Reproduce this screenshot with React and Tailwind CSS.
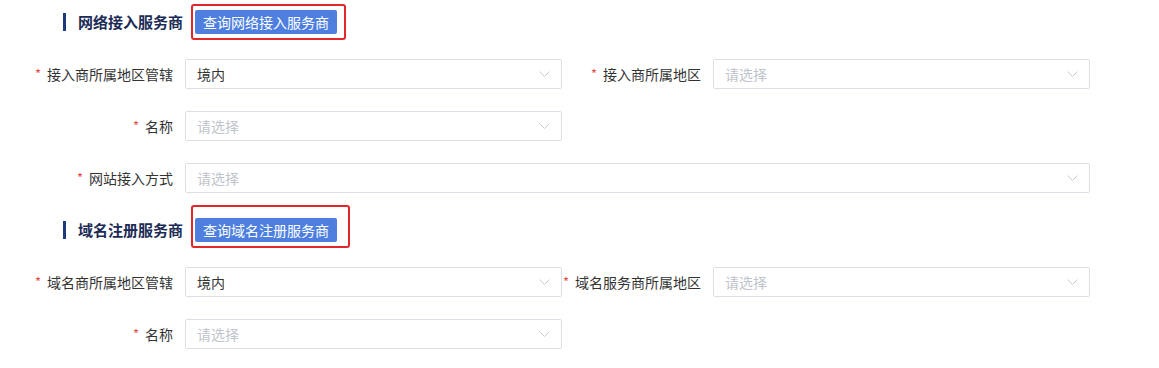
import React from "react";

const font = { fontFamily: '"Microsoft YaHei", "Noto Sans CJK SC", "Liberation Sans", sans-serif' };

const Chevron = () => (
  <svg width="11" height="6" viewBox="0 0 11 6" className="shrink-0">
    <polyline points="0.5,0.5 5.5,5.5 10.5,0.5" fill="none" stroke="#c8cbd2" strokeWidth="1" />
  </svg>
);

const Select = ({ value, className = "" }) => (
  <div
    className={`h-[30px] border border-[#dcdfe6] rounded-[2px] bg-white flex items-center justify-between pl-[11px] pr-[11px] ${className}`}
  >
    <span className={`text-[14px] ${value ? "text-[#333]" : "text-[#c0c4cc]"}`}>
      {value || "请选择"}
    </span>
    <Chevron />
  </div>
);

const Label = ({ children }) => (
  <div className="w-[151px] shrink-0 pr-[12px] flex items-center justify-end text-[14px] text-[#333] whitespace-nowrap">
    <span className="text-[#e6504a] mr-[6px] text-[13px]">*</span>
    {children}
  </div>
);

const Field = ({ label, value, wide }) => (
  <div className={`flex ${wide ? "col-span-2" : ""}`}>
    <Label>{label}</Label>
    <Select value={value} className={wide ? "w-[906px]" : "w-[378px]"} />
  </div>
);

const Header = ({ title, button, box }) => (
  <div className="flex items-center h-[24px] pl-[29px]">
    <div className="w-[3px] h-[18px] bg-[#1d3a7d]" />
    <div className="ml-[12px] text-[15px] font-bold text-[#1c2b55]">{title}</div>
    <div className="relative ml-[12px]">
      <div className="h-[24px] px-[8px] bg-[#4e7fdf] rounded-[2px] text-white text-[14px] flex items-center">
        {button}
      </div>
      <div className={`absolute border-2 border-[#e3262a] rounded-[3px] ${box}`} />
    </div>
  </div>
);

export default function App() {
  return (
    <div className="w-[1159px] h-[368px] bg-white overflow-hidden pl-[34px] pt-[10px]" style={font}>
      <Header
        title="网络接入服务商"
        button="查询网络接入服务商"
        box="-left-[4px] -top-[6px] -right-[9px] -bottom-[6px]"
      />
      <div className="grid grid-cols-[528px_528px] gap-y-[22px] mt-[25px]">
        <Field label="接入商所属地区管辖" value="境内" />
        <Field label="接入商所属地区" />
        <Field label="名称" />
        <div />
        <Field label="网站接入方式" wide />
      </div>
      <div className="mt-[25px]">
        <Header
          title="域名注册服务商"
          button="查询域名注册服务商"
          box="-left-[4px] -top-[13px] -right-[13px] -bottom-[6px]"
        />
      </div>
      <div className="grid grid-cols-[528px_528px] gap-y-[22px] mt-[25px]">
        <Field label="域名商所属地区管辖" value="境内" />
        <Field label="域名服务商所属地区" />
        <Field label="名称" />
      </div>
    </div>
  );
}
